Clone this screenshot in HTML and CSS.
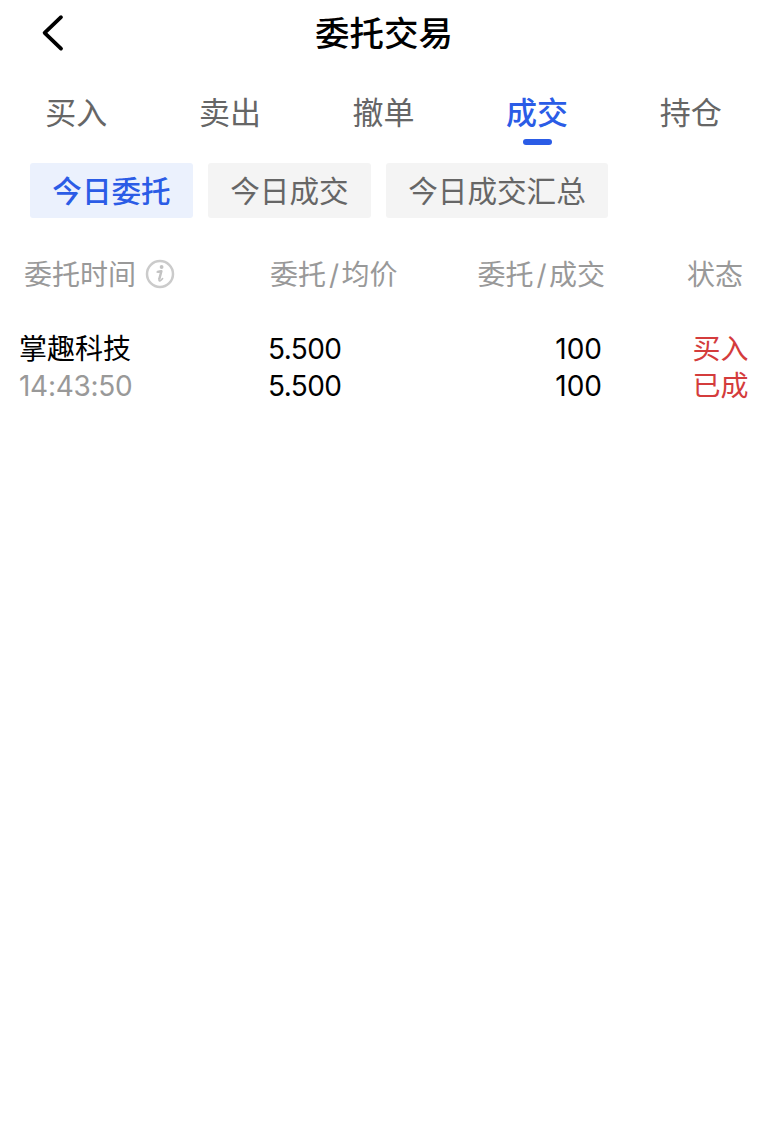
FILE: index.html
```html
<!DOCTYPE html>
<html lang="zh-CN">
<head>
    <meta charset="UTF-8">
    <meta name="viewport" content="width=device-width, initial-scale=1.0">
    <title>委托交易</title>
    <link rel="stylesheet" href="styles.css">
</head>
<body>
    <!-- Top bar -->
    <header class="topbar">
        <a class="back" href="#" aria-label="返回">
            <svg width="24" height="38" viewBox="0 0 24 38">
                <path d="M20 3.2 L3.6 18.8 L20 34.6" fill="none" stroke="#000" stroke-width="3.8" stroke-linecap="round" stroke-linejoin="round"/>
            </svg>
        </a>
        <h1 class="title">委托交易</h1>
    </header>

    <!-- Tabs -->
    <nav class="tabs">
        <a class="tab" href="#">买入</a>
        <a class="tab" href="#">卖出</a>
        <a class="tab" href="#">撤单</a>
        <a class="tab active" href="#">成交</a>
        <a class="tab" href="#">持仓</a>
    </nav>

    <!-- Filters -->
    <div class="filters">
        <button class="filter active">今日委托</button>
        <button class="filter">今日成交</button>
        <button class="filter">今日成交汇总</button>
    </div>

    <!-- Orders -->
    <div class="list-head">
        <div class="head-time">
            <span>委托时间</span>
            <svg class="info" width="30" height="30" viewBox="0 0 30 30">
                <circle cx="15" cy="15" r="13" fill="none" stroke="#cbcbcb" stroke-width="2.5"/>
                <circle cx="16.6" cy="8" r="1.9" fill="#c2c2c2"/>
                <path d="M12.4 12.9 L16.4 12.3 L14.2 20.4" fill="none" stroke="#c2c2c2" stroke-width="2.4" stroke-linejoin="round"/>
                <path d="M12.2 13 L16 12.2 M14.1 19.8 Q13.6 22.3 15.2 21.7 Q16.4 21.2 17.6 19.6" fill="none" stroke="#c2c2c2" stroke-width="1.6" stroke-linecap="round"/>
            </svg>
        </div>
        <div class="head-price">委托<span class="slash">/</span>均价</div>
        <div class="head-amount">委托<span class="slash">/</span>成交</div>
        <div class="head-status">状态</div>
    </div>
    <div class="order">
        <div class="order-name">
            <div>掌趣科技</div>
            <div class="order-time">14:43:50</div>
        </div>
        <div class="order-price">
            <div>5.500</div>
            <div>5.500</div>
        </div>
        <div class="order-amount">
            <div>100</div>
            <div>100</div>
        </div>
        <div class="order-status">
            <div>买入</div>
            <div>已成</div>
        </div>
    </div>
</body>
</html>
```

FILE: styles.css
```css
* {
    box-sizing: border-box;
}

body {
    margin: 0;
    min-height: 100vh;
    background-color: #fff;
    color: #000;
    font-family: Inter, "Noto Sans CJK SC", sans-serif;
}

a {
    text-decoration: none;
    color: inherit;
}

.topbar {
    display: grid;
    grid-template-columns: 100px 1fr 100px;
    align-items: center;
    height: 66px;
}

.back {
    display: flex;
    padding-left: 41px;
}

.title {
    margin: 0;
    padding-top: 1px;
    font-size: 34.5px;
    font-weight: 500;
    line-height: 50px;
    text-align: center;
}

.tabs {
    display: grid;
    grid-template-columns: repeat(5, 1fr);
    height: 97px;
    padding-top: 22px;
}

.tab {
    display: flex;
    flex-direction: column;
    align-items: center;
    font-size: 31px;
    line-height: 50px;
    text-indent: -1px;
    color: #666;
}

.tab.active {
    color: #2b5ce6;
    font-weight: 500;
}

/* short bar under the selected tab */
.tab.active::after {
    content: "";
    width: 29px;
    height: 5.5px;
    margin-top: 1px;
    border-radius: 3px;
    background-color: #2b5ce6;
}

.filters {
    display: flex;
    gap: 15px;
    padding-left: 30px;
}

.filter {
    height: 55px;
    padding: 1px 22.3px 0;
    border: none;
    border-radius: 3px;
    background-color: #f4f4f4;
    color: #666;
    font-family: inherit;
    font-size: 29.6px;
    line-height: 54px;
}

.filter.active {
    background-color: #ebf1fd;
    color: #2b5ce6;
    font-weight: 500;
}

.list-head,
.order {
    display: grid;
    grid-template-columns: 250px 200px 155px 1fr;
    font-size: 28px;
    line-height: 37px;
}

.list-head {
    margin-top: 39px;
    color: #999;
}

.head-time {
    display: flex;
    align-items: center;
    gap: 9px;
    padding-left: 24px;
}

.info {
    margin-bottom: 4px;
}

.head-price {
    padding-left: 20px;
}

.slash {
    margin: 0 2.5px 0 3px;
}

.head-amount {
    text-align: right;
}

.head-status {
    padding-right: 25px;
    text-align: right;
}

.order {
    margin-top: 37px;
}

.order-name {
    padding-left: 19px;
}

.order-time {
    color: #999;
    letter-spacing: -0.3px;
}

.order-price {
    padding-left: 18px;
    letter-spacing: -0.6px;
}

.order-amount {
    padding-right: 3px;
    text-align: right;
}

.order-status {
    padding-right: 19.5px;
    text-align: right;
    color: #d43c3c;
}
```
